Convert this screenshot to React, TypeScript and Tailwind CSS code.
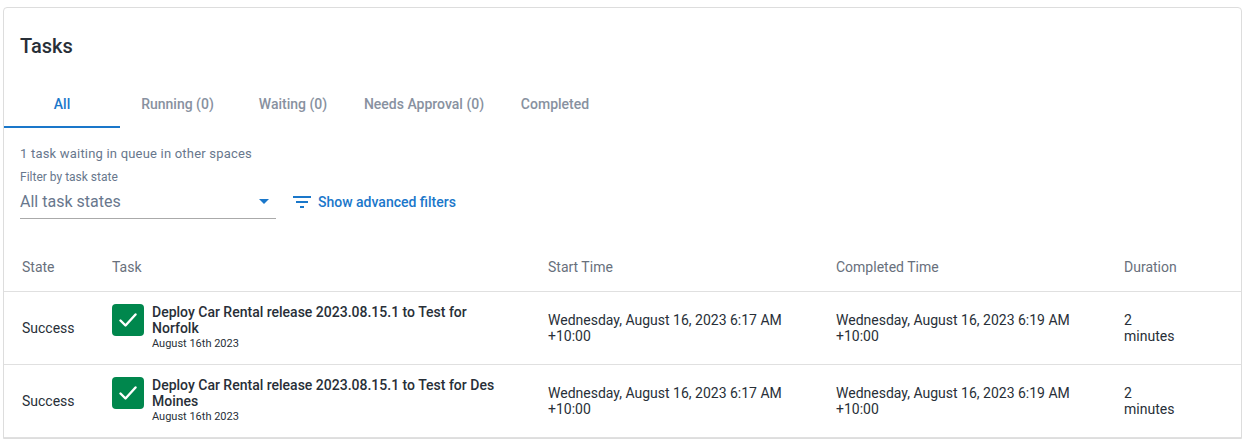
const tabs = [
  { label: "All", cls: "w-[116px] text-[#1a77ca]" },
  { label: "Running (0)", cls: "w-[115px] text-[#8891a0]" },
  { label: "Waiting (0)", cls: "w-[116px] text-[#8891a0]" },
  { label: "Needs Approval (0)", cls: "w-[146px] text-[#8891a0]" },
  { label: "Completed", cls: "w-[116px] text-[#8891a0]" },
];

const rows = [
  { first: "Deploy Car Rental release 2023.08.15.1 to Test for", second: "Norfolk" },
  { first: "Deploy Car Rental release 2023.08.15.1 to Test for Des", second: "Moines" },
];

export default function App() {
  return (
    <div className="h-[439px] w-[1242px] overflow-hidden bg-white pl-[3px] pt-[7px] font-['Roboto',sans-serif]">
      <div className="h-[432px] w-[1239px] rounded-t-[4px] border border-[#dddddd]">
        <h1 className="pl-4 pt-[26px] text-[20px] font-medium leading-6 text-[#282f38]">Tasks</h1>
        <div className="mt-[22px] flex h-12">
          {tabs.map((t, i) => (
            <div key={t.label} className={`flex flex-none items-center justify-center text-[14px] font-medium ${t.cls} ${i === 0 ? "border-b-2 border-[#1a77ca] pt-0.5" : ""}`}>
              {t.label}
            </div>
          ))}
        </div>
        <div className="pl-4">
          <p className="mt-[18px] text-[13px] leading-4 tracking-[0.2px] text-[#68778d]">1 task waiting in queue in other spaces</p>
          <p className="mt-[7px] text-[12px] leading-4 text-[#68778d]">Filter by task state</p>
          <div className="flex h-[34px]">
            <div className="flex w-64 items-center justify-between border-b border-[#aaaaaa] pr-[7px] text-[16px] text-[#68778d]">
              <span>All task states</span>
              <svg width="10" height="5" viewBox="0 0 10 5" fill="#1a77ca"><path d="M0 0h10L5 5z" /></svg>
            </div>
            <div className="ml-[17px] flex items-center gap-[7px] text-[14px] font-medium text-[#1a77ca]">
              <svg width="18" height="12" viewBox="0 0 18 12" fill="currentColor"><path d="M7 12h4v-2H7v2zM0 0v2h18V0H0zm3 7h12V5H3v2z" /></svg>
              <span>Show advanced filters</span>
            </div>
          </div>
        </div>
        <div className="mt-[24px] grid h-[49px] grid-cols-[90px_436px_288px_288px_1fr] items-center border-b border-[#e0e0e0] pl-[18px] text-[14px] text-[#68707c]">
          <span>State</span><span>Task</span><span>Start Time</span><span>Completed Time</span><span>Duration</span>
        </div>
        {rows.map((r) => (
          <div key={r.second} className="grid h-[73px] grid-cols-[90px_436px_288px_288px_1fr] items-center border-b border-[#e0e0e0] pl-[18px] text-[14px] leading-4 text-[#282f38]">
            <span>Success</span>
            <div className="flex gap-2">
              <div className="flex size-8 flex-none items-center justify-center rounded-[4px] bg-[#00874d]">
                <svg width="18" height="14" viewBox="0 0 18 14" fill="none" stroke="white" strokeWidth="2.4" strokeLinecap="round" strokeLinejoin="round"><path d="M1.5 7.5l5 5L16.5 1.5" /></svg>
              </div>
              <div>
                <div className="font-medium">{r.first}<br />{r.second}</div>
                <div className="text-[11px] leading-4">August 16th 2023</div>
              </div>
            </div>
            <div>Wednesday, August 16, 2023 6:17 AM<br />+10:00</div>
            <div>Wednesday, August 16, 2023 6:19 AM<br />+10:00</div>
            <div>2<br />minutes</div>
          </div>
        ))}
      </div>
    </div>
  );
}
